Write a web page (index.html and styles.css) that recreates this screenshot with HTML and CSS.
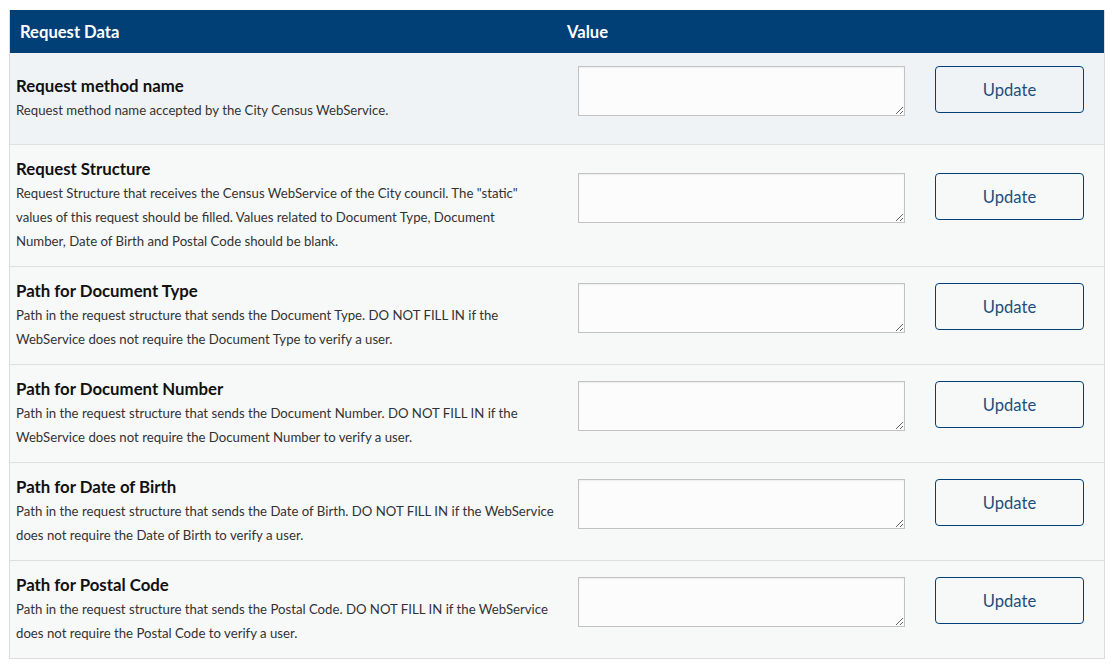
FILE: index.html
```html
<!DOCTYPE html>
<html>
<head>
<meta charset="utf-8">
<link rel="stylesheet" href="styles.css">
</head>
<body>
<div class="table">
  <div class="thead">
    <div class="th">Request Data</div>
    <div class="th">Value</div>
    <div class="th"></div>
  </div>
  <div class="row first">
    <div class="info">
      <div class="title">Request method name</div>
      <div class="desc">Request method name accepted by the City Census WebService.</div>
    </div>
    <div class="val"><textarea class="input"></textarea></div>
    <div class="act"><button class="btn">Update</button></div>
  </div>
  <div class="row">
    <div class="info">
      <div class="title">Request Structure</div>
      <div class="desc">Request Structure that receives the Census WebService of the City council. The "static"<br>values of this request should be filled. Values related to Document Type, Document<br>Number, Date of Birth and Postal Code should be blank.</div>
    </div>
    <div class="val"><textarea class="input"></textarea></div>
    <div class="act"><button class="btn">Update</button></div>
  </div>
  <div class="row">
    <div class="info">
      <div class="title">Path for Document Type</div>
      <div class="desc">Path in the request structure that sends the Document Type. DO NOT FILL IN if the WebService does not require the Document Type to verify a user.</div>
    </div>
    <div class="val"><textarea class="input"></textarea></div>
    <div class="act"><button class="btn">Update</button></div>
  </div>
  <div class="row">
    <div class="info">
      <div class="title">Path for Document Number</div>
      <div class="desc">Path in the request structure that sends the Document Number. DO NOT FILL IN if the WebService does not require the Document Number to verify a user.</div>
    </div>
    <div class="val"><textarea class="input"></textarea></div>
    <div class="act"><button class="btn">Update</button></div>
  </div>
  <div class="row">
    <div class="info">
      <div class="title">Path for Date of Birth</div>
      <div class="desc">Path in the request structure that sends the Date of Birth. DO NOT FILL IN if the WebService does not require the Date of Birth to verify a user.</div>
    </div>
    <div class="val"><textarea class="input"></textarea></div>
    <div class="act"><button class="btn">Update</button></div>
  </div>
  <div class="row">
    <div class="info">
      <div class="title">Path for Postal Code</div>
      <div class="desc">Path in the request structure that sends the Postal Code. DO NOT FILL IN if the WebService does not require the Postal Code to verify a user.</div>
    </div>
    <div class="val"><textarea class="input"></textarea></div>
    <div class="act"><button class="btn">Update</button></div>
  </div>
</div>
</body>
</html>
```
FILE: styles.css
```css
html, body {
  margin: 0;
  padding: 0;
  background: #ffffff;
}
body {
  padding: 10px 9px 0 9px;
  font-family: Lato, "Liberation Sans", sans-serif;
  color: #222;
}
.table {
  width: 1096px;
  border-left: 1px solid #dcdcdc;
  border-right: 1px solid #dcdcdc;
  box-sizing: border-box;
}
.thead, .row {
  display: grid;
  grid-template-columns: 547px 363px 1fr;
}
.thead {
  background: #004077;
  height: 43px;
  align-items: center;
}
.th {
  color: #fff;
  font-weight: 700;
  font-size: 16.6px;
  padding: 0 10px;
}
.row {
  background: #f7f8f8;
  border-bottom: 1px solid #dedede;
  align-items: center;
}
.row.first {
  background: #f0f3f6;
  border-bottom-color: #dfe2e5;
}
.info {
  padding: 12px 0 13px 6px;
}
.title {
  font-weight: 700;
  font-size: 16.8px;
  line-height: 24px;
  color: #111;
}
.desc {
  font-size: 13.2px;
  line-height: 24px;
  color: #333;
}
.val, .act {
  padding: 13px 0 28px 0;
  display: flex;
  align-items: flex-start;
}
.val {
  padding-left: 21px;
}
.act {
  padding-left: 15px;
  padding-bottom: 31px;
}
.input {
  width: 327px;
  height: 50px;
  box-sizing: border-box;
  border: 1px solid #c2c2c2;
  background: #fcfcfc;
  box-shadow: inset 0 1px 2px rgba(0,0,0,0.06);
  margin: 0;
  display: block;
  font-family: inherit;
}
.btn {
  width: 149px;
  height: 47px;
  box-sizing: border-box;
  border: 1px solid #004077;
  border-radius: 4px;
  background: transparent;
  color: #1d4f7d;
  font-family: inherit;
  font-size: 16.6px;
  cursor: pointer;
  margin: 0;
}
```
